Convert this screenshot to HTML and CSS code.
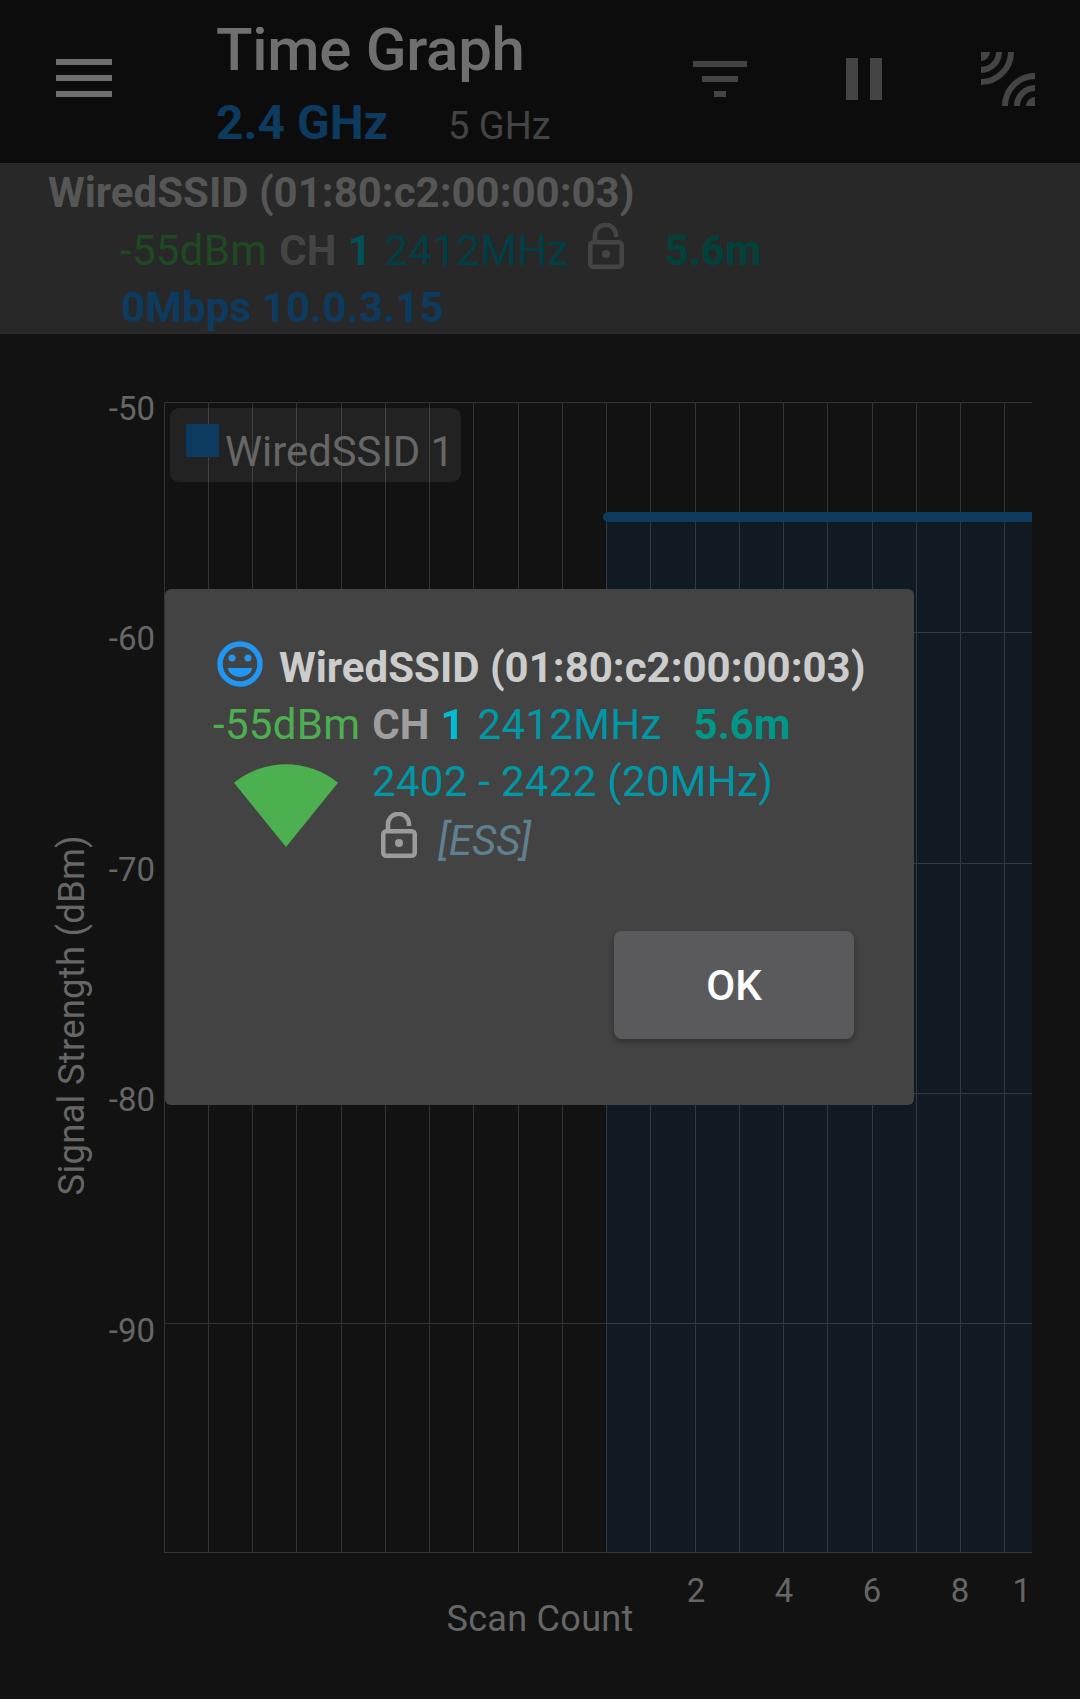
FILE: index.html
```html
<!doctype html>
<html>

<head>
	<meta charset=utf-8>
	<title>Time Graph</title>
	<meta name=viewport content="width=device-width, initial-scale=1">
	<link rel="stylesheet" href="styles.css">
</head>

<body>
	<header class="toolbar">
		<svg class="icon menu-icon" viewBox="0 0 72 72"><path d="M8 17h56v6H8zM8 33h56v6H8zM8 49h56v6H8z"/></svg>
		<div class="toolbar-title">
			<div class="title">Time Graph</div>
			<div class="tabs">
				<span class="tab-active">2.4 GHz</span>
				<span class="tab">5 GHz</span>
			</div>
		</div>
		<div class="actions">
			<svg class="icon" viewBox="0 0 72 72"><path d="M9 18h54v6H9zM18 33h36v6H18zM30 48h12v6H30z"/></svg>
			<svg class="icon" viewBox="0 0 72 72"><path d="M18 15h12v42H18zM42 15h12v42H42z"/></svg>
			<svg class="icon" viewBox="0 0 72 72">
				<path d="M9 9h9a9 9 0 0 1-9 9zM63 63h-9a9 9 0 0 1 9-9z"/>
				<path class="arc" d="M27 9a18 18 0 0 1-18 18M39 9a30 30 0 0 1-30 30M63 45a18 18 0 0 0-18 18M63 33a30 30 0 0 0-30 30"/>
			</svg>
		</div>
	</header>

	<section class="selected">
		<div class="ssid-dim">WiredSSID (01:80:c2:00:00:03)</div>
		<div class="row row-indent">
			<span class="regular dim-green">-55dBm</span>
			<span class="dim-ch">CH</span>
			<span class="dim-num">1</span>
			<span class="regular dim-freq">2412MHz</span>
			<svg class="lock lock-dim" viewBox="0 0 36 48"><path class="lock-line" d="M7 19V12.500a10.500 10.500 0 0 1 21-.5v2"/><rect class="lock-line" x="2.250" y="19.250" width="31.500" height="24.500" rx="3"/><circle class="lock-dot" cx="18" cy="31" r="4"/></svg>
			<span class="dim-dist">5.6m</span>
		</div>
		<div class="row row-indent row-speed">0Mbps 10.0.3.15</div>
	</section>

	<section class="chart">
		<div class="y-title">Signal Strength (dBm)</div>
		<div class="y-ticks">
			<span>-50</span>
			<span>-60</span>
			<span>-70</span>
			<span>-80</span>
			<span>-90</span>
		</div>
		<div class="plot">
			<svg class="plot-svg" viewBox="0 0 868 1151">
				<rect class="area" x="442" y="120" width="426" height="1031"/>
				<path class="grid" d="M.5 0v1151M44.500 0v1151M88.500 0v1151M132.500 0v1151M177.500 0v1151M221.500 0v1151M265.500 0v1151M309.500 0v1151M354.500 0v1151M398.500 0v1151M442.500 0v1151M486.500 0v1151M531.500 0v1151M575.500 0v1151M619.500 0v1151M663.500 0v1151M708.500 0v1151M752.500 0v1151M796.500 0v1151M840.500 0v1151M0 .5h868M0 230.500h868M0 461.500h868M0 691.500h868M0 921.500h868M0 1150.500h868"/>
				<path class="series" d="M444 115H868"/>
			</svg>
			<div class="legend">
				<span class="legend-swatch"></span>
				<span class="legend-label">WiredSSID 1</span>
			</div>
		</div>
		<div class="x-ticks">
			<span>2</span>
			<span>4</span>
			<span>6</span>
			<span>8</span>
			<span class="x-tick-last">10</span>
		</div>
		<div class="x-title">Scan Count</div>
	</section>

	<div class="dialog">
		<div class="row dialog-head">
			<svg class="smile" viewBox="0 0 46 46">
				<circle class="smile-ring" cx="23" cy="23" r="20"/>
				<circle class="smile-fill" cx="15" cy="17" r="3.500"/>
				<circle class="smile-fill" cx="31" cy="17" r="3.500"/>
				<path class="smile-fill" d="M11 27h24a12 9 0 0 1-24 0z"/>
			</svg>
			<span class="ssid">WiredSSID (01:80:c2:00:00:03)</span>
		</div>
		<div class="row dialog-stats">
			<span class="regular green">-55dBm</span>
			<span class="ch">CH</span>
			<span class="num">1</span>
			<span class="regular freq">2412MHz</span>
			<span class="dist">5.6m</span>
		</div>
		<div class="dialog-info">
			<svg class="wedge" viewBox="0 0 104 83"><path d="M0 18.700A82.500 82.500 0 0 1 104 18.700L52 83z"/></svg>
			<div>
				<div class="regular freq range">2402 - 2422 (20MHz)</div>
				<div class="row caps">
					<svg class="lock lock-open" viewBox="0 0 36 48"><path class="lock-line" d="M7 19V12.500a10.500 10.500 0 0 1 21-.5v2"/><rect class="lock-line" x="2.250" y="19.250" width="31.500" height="24.500" rx="3"/><circle class="lock-dot" cx="18" cy="31" r="4"/></svg>
					<span class="ess">[ESS]</span>
				</div>
			</div>
		</div>
		<div class="dialog-actions">
			<button class="ok">OK</button>
		</div>
	</div>
</body>
</html>
```

FILE: styles.css
```css
html, body{
	margin: 0; padding: 0;
	height: 100%;
	box-sizing: border-box;
	overflow: hidden;
}

body{
	position: relative;
	background-color: #121212;
	font-family: Roboto, "Liberation Sans", sans-serif;
	font-size: 42px;
	line-height: 56px;
}

.icon{
	display: block;
	width: 72px;
	height: 72px;
	fill: #444;
}

.row{
	display: flex;
	align-items: center;
}

.regular{
	letter-spacing: .3px;
}

/* toolbar */
.toolbar{
	display: flex;
	height: 163px;
	padding-right: 36px;
	box-sizing: border-box;
	background-color: #0c0c0c;
}

.menu-icon{
	margin: 42px 96px 0 48px;
	fill: #6f6f6f;
}

.toolbar-title{
	padding-top: 15px;
}

.title{
	font-size: 60px;
	font-weight: 500;
	line-height: 70px;
	letter-spacing: -.3px;
	color: #6f6f6f;
}

.tabs{
	display: flex;
	align-items: baseline;
	margin-top: 10px;
	gap: 60px;
}

.tab-active{
	font-size: 48px;
	font-weight: 700;
	color: #0d3a5f;
}

.tab{
	font-size: 38px;
	color: #444;
}

.actions{
	display: flex;
	gap: 72px;
	margin: 43px 0 0 auto;
}

.arc{
	fill: none;
	stroke: #444;
	stroke-width: 6;
}

/* selected access point */
.selected{
	height: 171px;
	padding: 1px 0 0 48px;
	box-sizing: border-box;
	background-color: #282828;
	line-height: 58px;
}

.ssid-dim{
	font-weight: 700;
	color: #565656;
}

.row-indent{
	padding-left: 72px;
	gap: 12px;
}

.row-speed{
	margin-top: -1px;
	padding-left: 73px;
	font-weight: 700;
	letter-spacing: .1px;
	color: #0d3a5f;
}

.dim-green{ color: #1f4a21; }
.dim-ch{ font-weight: 700; color: #444; }
.dim-num{ font-weight: 700; color: #005058; margin-left: -1px; }
.dim-freq{ color: #003f46; margin-left: 1px; }
.dim-dist{ font-weight: 700; color: #00423b; margin-left: 29px; }

.lock{
	display: block;
	align-self: flex-start;
	width: 36px;
	height: 48px;
	flex: none;
	margin: 1px 0 0 7px;
}

.lock-line{
	fill: none;
	stroke-width: 4.500;
}

.lock-dim .lock-line{ stroke: #444; }
.lock-dim .lock-dot{ fill: #444; }
.lock-open .lock-line{ stroke: #9b9b9b; }
.lock-open .lock-dot{ fill: #9b9b9b; }

/* chart */
.chart{
	display: grid;
	grid-template-columns: 108px 56px 868px 48px;
	padding-top: 68px;
	font-size: 33px;
	color: #666;
}

.y-title{
	grid-row: 1;
	align-self: start;
	justify-self: end;
	margin: 433px 16px 0 0;
	writing-mode: vertical-rl;
	transform: rotate(180deg);
	font-size: 36.500px;
	letter-spacing: .2px;
	line-height: 40px;
	white-space: nowrap;
}

.y-ticks{
	display: flex;
	flex-direction: column;
	margin-left: -10px;
	padding: 1px 9px 0 0;
	text-align: right;
}

.y-ticks span{
	height: 230.400px;
	line-height: 12px;
}

.plot{
	position: relative;
	height: 1151px;
}

.plot-svg{
	display: block;
	width: 868px;
	height: 1151px;
}

.area{ fill: #111a22; }

.grid{
	fill: none;
	stroke: #fff;
	stroke-opacity: .14;
	stroke-width: 1;
	shape-rendering: crispEdges;
}

.series{
	fill: none;
	stroke: #0d3a5f;
	stroke-width: 10;
	stroke-linecap: round;
}

.legend{
	position: absolute;
	left: 6px;
	top: 6px;
	display: flex;
	width: 291px;
	height: 74px;
	box-sizing: border-box;
	padding: 16px 0 0 16px;
	border-radius: 9px;
	background-color: rgba(255,255,255,.07);
	font-size: 41.800px;
	line-height: 46px;
	color: #666;
}

.legend-swatch{
	width: 33px;
	height: 33px;
	margin-right: 6px;
	background-color: #0d3a5f;
}

.legend-label{
	margin-top: 5px;
}

.x-ticks{
	grid-column: 3;
	display: flex;
	padding: 16px 0 0 488px;
	overflow: hidden;
	line-height: 40px;
}

.x-ticks span{
	flex: none;
	width: 88px;
	text-align: center;
}

.x-ticks .x-tick-last{
	margin-left: -17px;
}

.x-title{
	grid-column: 1 / 5;
	margin-top: -13px;
	text-align: center;
	font-size: 36px;
	letter-spacing: .3px;
	line-height: 42px;
}

/* dialog */
.dialog{
	position: absolute;
	left: 165px;
	top: 589px;
	width: 749px;
	height: 516px;
	box-sizing: border-box;
	padding-top: 51px;
	border-radius: 6px;
	background-color: #434343;
}

.dialog-head{
	padding-left: 52px;
}

.smile{
	align-self: flex-start;
	width: 46px;
	height: 46px;
	margin: 1px 16px 0 0;
}

.smile-ring{
	fill: none;
	stroke: #2196f3;
	stroke-width: 5.500;
}

.smile-fill{ fill: #2196f3; }

.ssid{
	font-weight: 700;
	color: #ccc;
}

.dialog-stats{
	margin-top: 1px;
	padding-left: 48px;
	gap: 12px;
}

.green{ color: #4caf50; }
.ch{ font-weight: 700; color: #9e9e9e; }
.num{ font-weight: 700; color: #00bcd4; margin-left: -1px; }
.freq{ color: #0097a7; }
.dialog-stats .freq{ margin-left: 1px; }
.dist{ font-weight: 700; color: #009688; margin-left: 20px; }

.dialog-info{
	display: flex;
	align-items: flex-start;
}

.wedge{
	width: 104px;
	height: 83px;
	margin: 11px 34px 0 69px;
	fill: #4caf50;
}

.range{
	margin-top: 1px;
}

.caps{
	margin-top: 3px;
}

.lock-open{
	margin: -1px 0 0 9px;
}

.ess{
	margin-left: 21px;
	font-style: italic;
	color: #5f8091;
}

.dialog-actions{
	display: flex;
	justify-content: flex-end;
	margin: 62px 60px 0 0;
}

.ok{
	width: 240px;
	height: 108px;
	border: none;
	border-radius: 8px;
	background-color: #5a5a5c;
	box-shadow: 0 3px 6px rgba(0,0,0,.3);
	font: 500 42px Roboto, sans-serif;
	color: #fff;
}
```
